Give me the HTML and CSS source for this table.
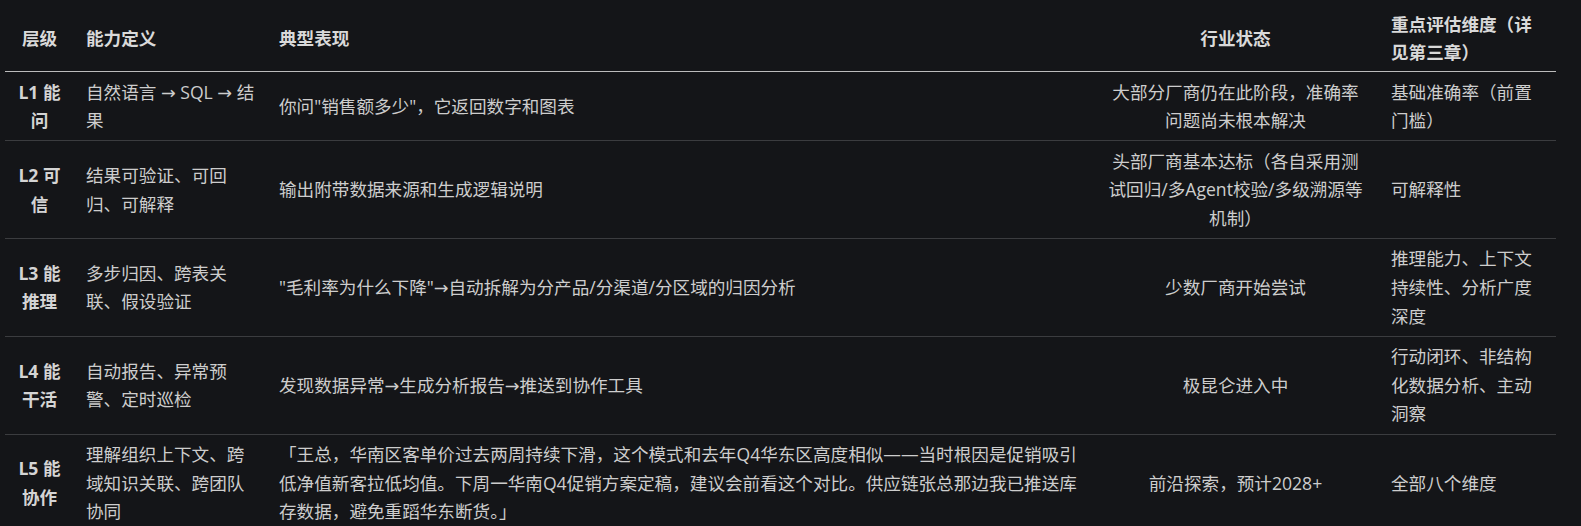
FILE: index.html
```html
<!DOCTYPE html>
<html lang="zh-CN">
<head>
    <meta charset="UTF-8">
    <meta name="viewport" content="width=device-width, initial-scale=1.0">
    <title>能力层级</title>
    <link rel="stylesheet" href="styles.css">
</head>
<body>

<div class="wrap">
    <table class="levels">
        <colgroup>
            <col class="c-level">
            <col class="c-def">
            <col class="c-show">
            <col class="c-state">
            <col class="c-dim">
        </colgroup>
        <thead>
            <tr>
                <th class="center">层级</th>
                <th>能力定义</th>
                <th>典型表现</th>
                <th class="center">行业状态</th>
                <th>重点评估维度（详见第三章）</th>
            </tr>
        </thead>
        <tbody>
            <tr>
                <td class="level">L1 能问</td>
                <td>自然语言 → SQL → 结果</td>
                <td>你问"销售额多少"，它返回数字和图表</td>
                <td class="center">大部分厂商仍在此阶段，准确率问题尚未根本解决</td>
                <td>基础准确率（前置门槛）</td>
            </tr>
            <tr>
                <td class="level">L2 可信</td>
                <td>结果可验证、可回归、可解释</td>
                <td>输出附带数据来源和生成逻辑说明</td>
                <td class="center">头部厂商基本达标（各自采用测试回归/多Agent校验/多级溯源等机制）</td>
                <td>可解释性</td>
            </tr>
            <tr>
                <td class="level">L3 能推理</td>
                <td>多步归因、跨表关联、假设验证</td>
                <td>"毛利率为什么下降"→自动拆解为分产品/分渠道/分区域的归因分析</td>
                <td class="center">少数厂商开始尝试</td>
                <td>推理能力、上下文持续性、分析广度深度</td>
            </tr>
            <tr>
                <td class="level">L4 能干活</td>
                <td>自动报告、异常预警、定时巡检</td>
                <td>发现数据异常→生成分析报告→推送到协作工具</td>
                <td class="center">极昆仑进入中</td>
                <td>行动闭环、非结构化数据分析、主动洞察</td>
            </tr>
            <tr>
                <td class="level">L5 能协作</td>
                <td>理解组织上下文、跨域知识关联、跨团队协同</td>
                <td>「王总，华南区客单价过去两周持续下滑，这个模式和去年Q4华东区高度相似——当时根因是促销吸引低净值新客拉低均值。下周一华南Q4促销方案定稿，建议会前看这个对比。供应链张总那边我已推送库存数据，避免重蹈华东断货。」</td>
                <td class="center">前沿探索，预计2028+</td>
                <td>全部八个维度</td>
            </tr>
        </tbody>
    </table>
</div>

</body>
</html>
```

FILE: styles.css
```css
html, body {
    margin: 0;
    padding: 0;
    background-color: #141518;
}

.wrap {
    padding: 4px 5px 0;
}

.levels {
    table-layout: fixed;
    width: 1551px;
    border-collapse: collapse;

    color: #cdcdcd;
    font-family: "Open Sans", "DejaVu Sans", "Noto Sans CJK SC", sans-serif;
    font-size: 17.6px;
    line-height: 28.6px;
}

.c-level { width: 69px; }
.c-def { width: 193px; }
.c-show { width: 825px; }
.c-state { width: 287px; }
.c-dim { width: 177px; }

.levels th,
.levels td {
    padding: 5.5px 12px;
    vertical-align: middle;
    text-align: left;
}

.levels th {
    color: #d9d9d9;
    font-weight: 700;
    line-height: 28px;
    border-bottom: 1px solid #bcbcbc;
}

.levels td {
    border-bottom: 1px solid #3b3c3f;
}

.levels .center {
    text-align: center;
}

.levels td.level {
    color: #d4d4d4;
    font-weight: 700;
    text-align: center;
}
```
